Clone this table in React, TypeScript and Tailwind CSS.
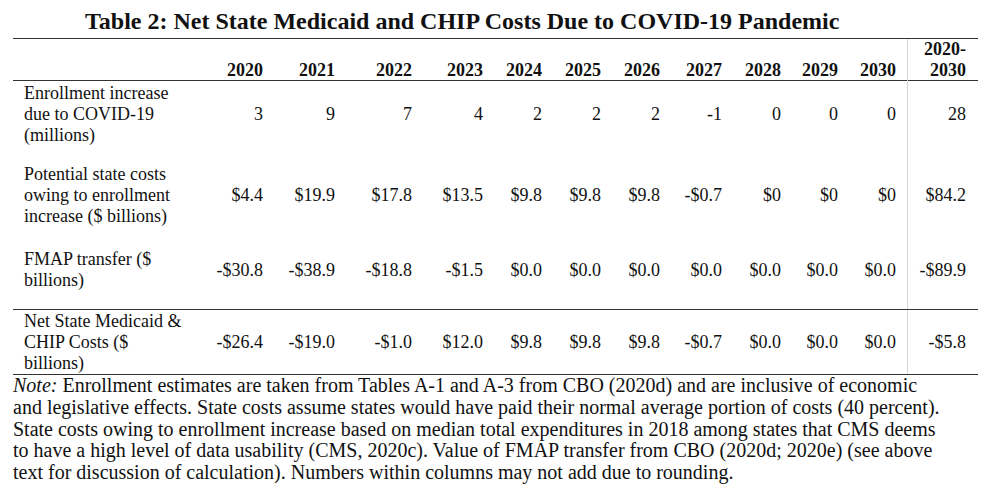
const years = ["2020", "2021", "2022", "2023", "2024", "2025", "2026", "2027", "2028", "2029", "2030"];

const rows = [
  {
    label: ["Enrollment increase", "due to COVID-19", "(millions)"],
    values: ["3", "9", "7", "4", "2", "2", "2", "-1", "0", "0", "0"],
    total: "28",
    pad: "pt-[2px] pb-[18px]",
    line: false,
  },
  {
    label: ["Potential state costs", "owing to enrollment", "increase ($ billions)"],
    values: ["$4.4", "$19.9", "$17.8", "$13.5", "$9.8", "$9.8", "$9.8", "-$0.7", "$0", "$0", "$0"],
    total: "$84.2",
    pad: "pt-0 pb-[21px]",
    line: false,
  },
  {
    label: ["FMAP transfer ($", "billions)"],
    values: ["-$30.8", "-$38.9", "-$18.8", "-$1.5", "$0.0", "$0.0", "$0.0", "$0.0", "$0.0", "$0.0", "$0.0"],
    total: "-$89.9",
    pad: "pt-[1px] pb-[18px]",
    line: true,
  },
  {
    label: ["Net State Medicaid &", "CHIP Costs ($", "billions)"],
    values: ["-$26.4", "-$19.0", "-$1.0", "$12.0", "$9.8", "$9.8", "$9.8", "-$0.7", "$0.0", "$0.0", "$0.0"],
    total: "-$5.8",
    pad: "pt-[1px] pb-0",
    line: false,
  },
];

// column widths tuned so right edges land under the header years
const grid = "grid grid-cols-[190px_60px_72px_77px_71px_59px_59px_59px_62px_59px_57px_69px_71px]";

const noteLines = [
  "Enrollment estimates are taken from Tables A-1 and A-3 from CBO (2020d) and are inclusive of economic",
  "and legislative effects. State costs assume states would have paid their normal average portion of costs (40 percent).",
  "State costs owing to enrollment increase based on median total expenditures in 2018 among states that CMS deems",
  "to have a high level of data usability (CMS, 2020c). Value of FMAP transfer from CBO (2020d; 2020e) (see above",
  "text for discussion of calculation). Numbers within columns may not add due to rounding.",
];

export default function App() {
  return (
    <div className="w-[996px] h-[493px] bg-white text-[#111] overflow-hidden font-['Liberation_Serif','Times_New_Roman',serif]">
      <h1 className="pl-[85px] pt-[7px] h-[38px] text-[24px] leading-[28px] font-bold whitespace-nowrap">
        Table 2: Net State Medicaid and CHIP Costs Due to COVID-19 Pandemic
      </h1>

      <div className="ml-[13px] w-[965px] border-t-[1.5px] border-b-[1.5px] border-[#333] text-[18px] leading-[21px]">
        <div className={`${grid} h-[42px] items-end font-bold border-b-[1.5px] border-[#333]`}>
          <div />
          {years.map((y) => (
            <div key={y} className={`text-right ${y === "2030" ? "pr-[11px]" : ""}`}>
              {y}
            </div>
          ))}
          <div className="h-full border-l border-[#d6d6d6] pr-[12px] text-right flex flex-col justify-end">
            <span>2020-</span>
            <span>2030</span>
          </div>
        </div>

        {rows.map((row, i) => (
          <div key={i} className={`${grid} items-stretch ${row.line ? "border-b-[1.5px] border-[#333]" : ""}`}>
            <div className={`pl-[11px] whitespace-nowrap ${row.pad}`}>
              {row.label.map((l) => (
                <div key={l}>{l}</div>
              ))}
            </div>
            {row.values.map((v, j) => (
              <div
                key={j}
                className={`flex items-center justify-end whitespace-nowrap ${row.pad} ${j === 10 ? "pr-[11px]" : ""}`}
              >
                {v}
              </div>
            ))}
            <div className={`flex items-center justify-end border-l border-[#d6d6d6] pr-[12px] ${row.pad}`}>
              {row.total}
            </div>
          </div>
        ))}
      </div>

      <div className="pl-[13px] text-[20px] leading-[21.75px] whitespace-nowrap">
        <div>
          <i>Note:</i> {noteLines[0]}
        </div>
        {noteLines.slice(1).map((l) => (
          <div key={l}>{l}</div>
        ))}
      </div>
    </div>
  );
}
